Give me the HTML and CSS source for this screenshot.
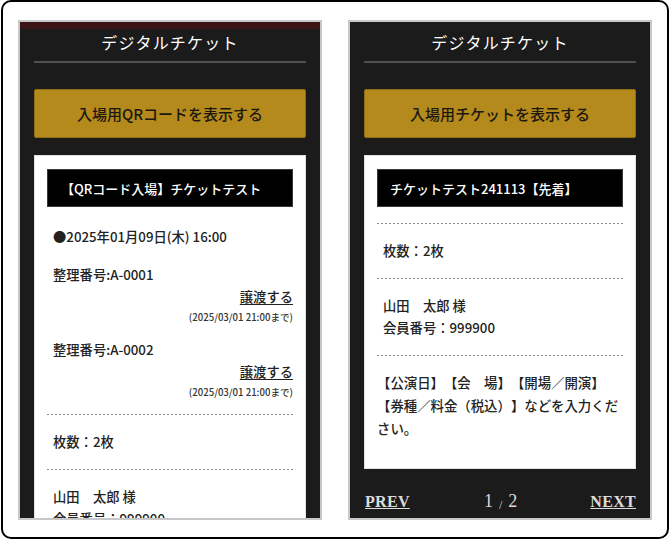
FILE: index.html
```html
<!DOCTYPE html>
<html lang="ja">
<head>
<meta charset="utf-8">
<title>デジタルチケット</title>
<link rel="stylesheet" href="styles.css">
</head>
<body>
<div class="frame">
  <div class="phone phone-a">
    <div class="strip"></div>
    <header class="head">
      <h1 class="title">デジタルチケット</h1>
      <div class="divider"></div>
    </header>
    <button class="btn">入場用QRコードを表示する</button>
    <section class="card">
      <h2 class="card-title">【QRコード入場】チケットテスト</h2>
      <div class="block">
        <p class="row">●2025年01月09日(木) 16:00</p>
        <div class="seat">
          <p class="row">整理番号:A-0001</p>
          <p class="row right"><a class="link">譲渡する</a></p>
          <p class="note">(2025/03/01 21:00まで)</p>
        </div>
        <div class="seat">
          <p class="row">整理番号:A-0002</p>
          <p class="row right"><a class="link">譲渡する</a></p>
          <p class="note">(2025/03/01 21:00まで)</p>
        </div>
      </div>
      <div class="sec"><p class="row">枚数：2枚</p></div>
      <div class="sec"><p class="row">山田　太郎 様</p><p class="row">会員番号：999900</p></div>
    </section>
  </div>

  <div class="phone phone-b">
    <header class="head">
      <h1 class="title">デジタルチケット</h1>
      <div class="divider"></div>
    </header>
    <button class="btn">入場用チケットを表示する</button>
    <section class="card">
      <h2 class="card-title">チケットテスト241113【先着】</h2>
      <div class="sec first"><p class="row">枚数：2枚</p></div>
      <div class="sec"><p class="row">山田　太郎 様</p><p class="row">会員番号：999900</p></div>
      <div class="sec last"><p class="para">【公演日】【会　場】【開場／開演】【券種／料金（税込）】などを入力ください。</p></div>
    </section>
    <nav class="pager">
      <a class="pg-link">PREV</a>
      <span class="pg-count">1<span class="slash">/</span>2</span>
      <a class="pg-link">NEXT</a>
    </nav>
  </div>
</div>
</body>
</html>
```

FILE: styles.css
```css
* { box-sizing: border-box; }
html, body { margin: 0; padding: 0; background: #fff; }
body {
  width: 670px;
  height: 540px;
  overflow: hidden;
  font-family: "Noto Sans CJK JP", "Noto Sans", sans-serif;
  text-spacing-trim: space-all;
}
.frame {
  width: 668px;
  height: 539px;
  margin: 0 1px;
  border: 2px solid #000;
  border-radius: 10px;
  padding: 18px 13px 0 15px;
  display: flex;
  gap: 26px;
}
.phone {
  position: relative;
  width: 304px;
  height: 500px;
  flex: none;
  border: 2px solid #c8c8c8;
  background: #1b1b1b;
  overflow: hidden;
  padding: 0 14px;
}
.strip {
  position: absolute;
  left: 0; right: 0; top: 0;
  height: 7px;
  background: #3b1416;
}
.head { padding-top: 8px; }
.title {
  margin: 0;
  text-align: center;
  color: #fff;
  font-size: 16px;
  font-weight: 400;
  line-height: 24px;
  letter-spacing: 1.2px;
}
.divider {
  margin-top: 7px;
  height: 2px;
  background: #505050;
}
.btn {
  display: block;
  width: 100%;
  height: 49px;
  margin-top: 26px;
  background: #b38a1b;
  border: 1px solid #8f6d10;
  border-radius: 2px;
  color: #1c1710;
  font-family: inherit;
  font-size: 15px;
  font-weight: 500;
  padding: 0;
  cursor: pointer;
}
.card {
  margin-top: 17px;
  background: #fff;
  border: 1px solid #e2e2e2;
  padding: 13px 12px 14px;
  color: #222;
}
.card-title {
  margin: 0;
  height: 38px;
  display: flex;
  align-items: center;
  padding-left: 12px;
  background: #000;
  border: 1px solid #3a3a3a;
  color: #fff;
  font-size: 13px;
  font-weight: 500;
}
.phone-a .card-title { padding-left: 13px; }
.row {
  margin: 0;
  padding-left: 6px;
  font-size: 13.3px;
  font-weight: 500;
  line-height: 22px;
}
.row.right { text-align: right; padding-left: 0; }
.link { color: #222; text-decoration: underline; text-underline-offset: 2px; }
.note {
  margin: 0;
  text-align: right;
  font-size: 9.6px;
  font-weight: 500;
  line-height: 18px;
  color: #333;
}
.block { padding-top: 19px; padding-bottom: 13px; }
.seat { margin-top: 16px; }
.seat + .seat { margin-top: 13px; }
.sec {
  padding: 17px 0 16px;
  background-image: linear-gradient(to right, #8a8a8a 50%, transparent 50%);
  background-size: 4px 1px;
  background-repeat: repeat-x;
  background-position: left top;
}
.sec.first { margin-top: 16px; }
.sec.last { padding: 16px 0 14px; }
.para {
  margin: 0;
  font-size: 13.4px;
  font-weight: 500;
  line-height: 23px;
}
.pager {
  margin-top: 22px;
  display: flex;
  justify-content: space-between;
  align-items: baseline;
  line-height: 20px;
  font-family: "Liberation Serif", "Times New Roman", serif;
  color: #dcdcdc;
}
.pg-link {
  font-size: 16px;
  font-weight: 700;
  letter-spacing: 0.3px;
  text-decoration: underline;
  padding-left: 1px;
}
.pg-count {
  font-size: 18px;
  font-weight: 400;
  margin-left: 2px;
}
.slash {
  font-size: 12px;
  margin: 0 6px;
  position: relative;
  top: 2px;
}
```
